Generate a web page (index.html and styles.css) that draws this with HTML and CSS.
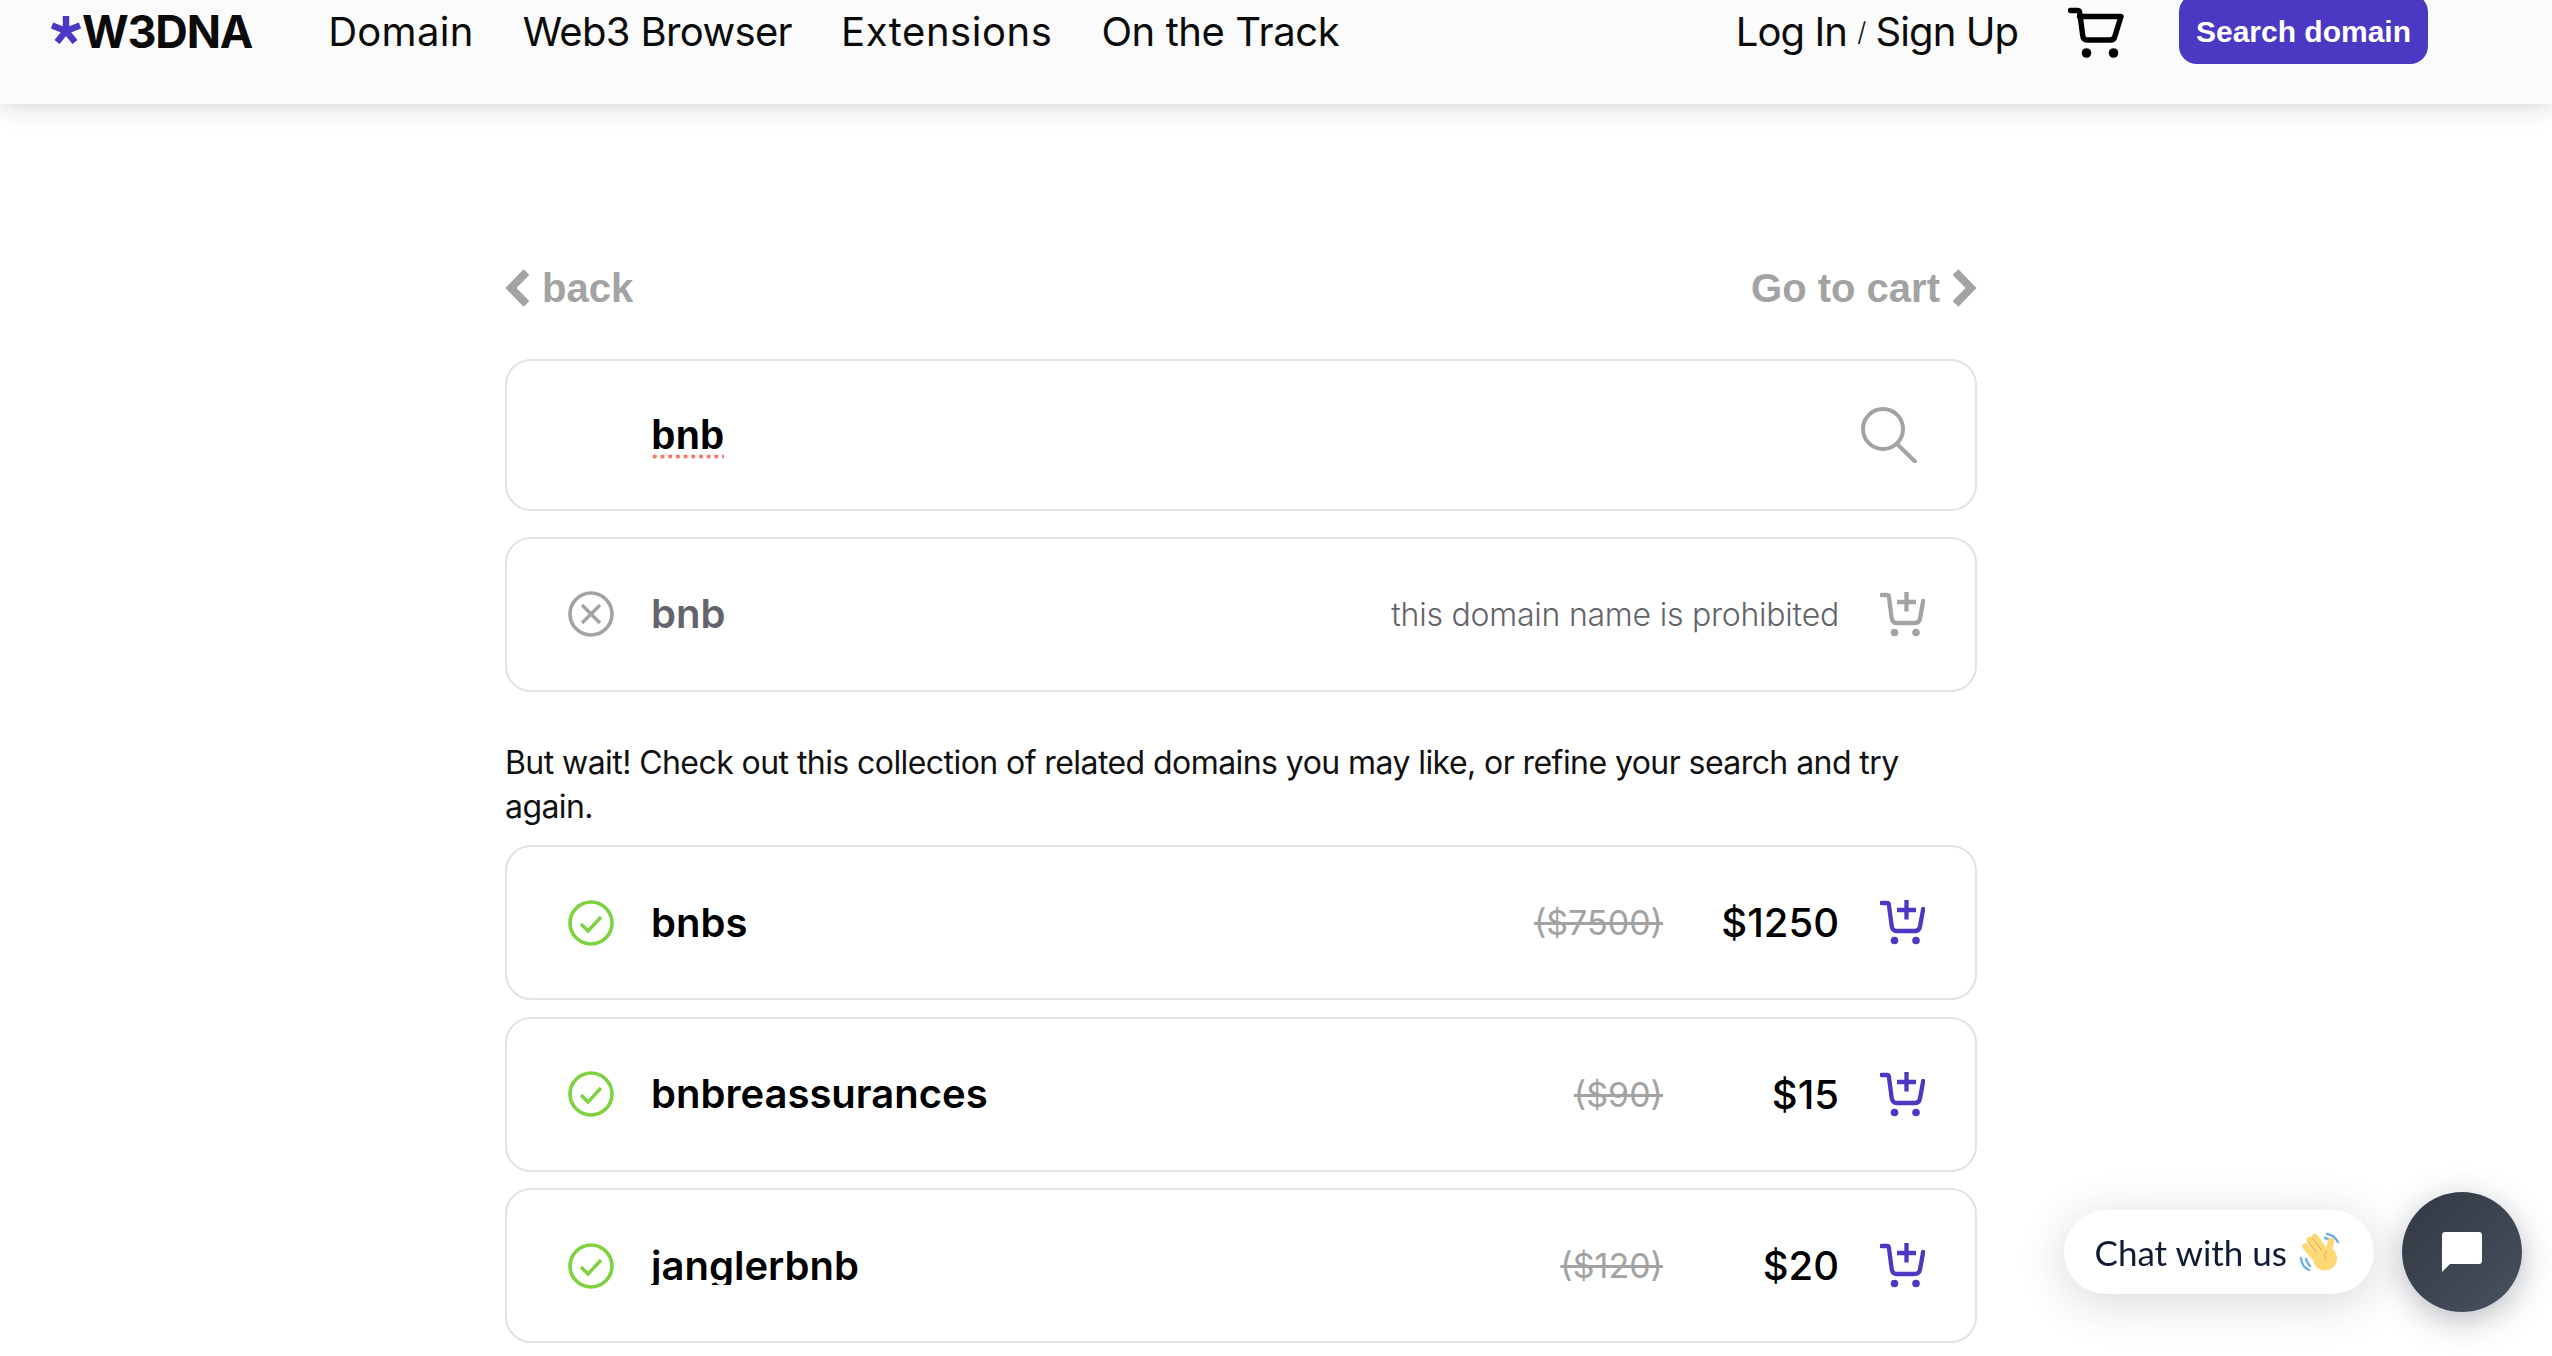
FILE: index.html
```html
<!DOCTYPE html>
<html lang="en">
<head>
<meta charset="UTF-8">
<meta name="viewport" content="width=device-width, initial-scale=1.0">
<title>W3DNA - Domain search</title>
<link rel="stylesheet" href="styles.css">
</head>
<body>
<svg class="sprite" width="0" height="0">
    <symbol id="cart-plus" viewBox="0 0 45 45">
        <path d="M1.500 3h5.500c1 0 1.700.6 1.900 1.700L11.700 26c.4 3 2 5 5 5h17.800c3 0 5-1.700 5.500-4.500L43.200 9" fill="none" stroke="currentColor" stroke-width="4.300" stroke-linecap="round" stroke-linejoin="round"/>
        <path d="M26.500 0v19.500M17 10h19" fill="none" stroke="currentColor" stroke-width="4.300"/>
        <circle cx="14.500" cy="40.500" r="3.800" fill="currentColor"/>
        <circle cx="36" cy="40.500" r="3.800" fill="currentColor"/>
    </symbol>
    <symbol id="check" viewBox="0 0 46 46">
        <circle cx="23" cy="23" r="21" fill="none" stroke="#7ed23f" stroke-width="3.600"/>
        <path d="M13 24l7 7 13-14" fill="none" stroke="#7ed23f" stroke-width="3.400"/>
    </symbol>
</svg>

<header class="topbar">
    <a class="logo">
        <svg class="logo-star" viewBox="0 0 30 28"><path d="M15 0v15M1 9.500l14 5.500M29 9.500L15 15M6 26l9-11M24 26l-9-11" stroke="#4b38c3" stroke-width="6.500" fill="none"/></svg>
        <span>W3DNA</span>
    </a>
    <nav class="nav">
        <a>Domain</a>
        <a>Web3 Browser</a>
        <a>Extensions</a>
        <a>On the Track</a>
    </nav>
    <a class="login">Log In <small>/</small> Sign Up</a>
    <svg class="top-cart" viewBox="0 0 56 52">
        <path d="M2.500 3.500h7c1.200 0 2 .7 2.200 2l3.100 23.500c.3 2.500 2 4 4.500 4h23c2.500 0 4-1.500 4.500-3.500L53 9.500H11.500" fill="none" stroke="#000" stroke-width="5.400" stroke-linecap="round" stroke-linejoin="round"/>
        <circle cx="18.500" cy="46" r="4.800"/>
        <circle cx="45.500" cy="46" r="4.800"/>
    </svg>
    <a class="btn-search">Search domain</a>
</header>

<main class="content">
    <div class="back-row">
        <a class="back-link">
            <svg class="chevron" viewBox="0 0 24 38"><path d="M21.500 3L6 19l15.500 16" fill="none" stroke="#a3a3a3" stroke-width="8"/></svg>
            back
        </a>
        <a class="back-link">
            Go to cart
            <svg class="chevron" viewBox="0 0 24 38"><path d="M2.500 3L18 19 2.500 35" fill="none" stroke="#a3a3a3" stroke-width="8"/></svg>
        </a>
    </div>

    <div class="card search-card">
        <span class="search-text">bnb</span>
        <svg class="search-icon" viewBox="0 0 56 56"><circle cx="22" cy="22" r="20" fill="none" stroke="#a3a3a3" stroke-width="4"/><path d="M36 37l18 17.500" stroke="#a3a3a3" stroke-width="4" stroke-linecap="round"/></svg>
    </div>

    <div class="card result muted">
        <svg class="state" viewBox="0 0 46 46"><circle cx="23" cy="23" r="21" fill="none" stroke="#a3a3a3" stroke-width="3.600"/><path d="M14 14l18 18M32 14L14 32" stroke="#a3a3a3" stroke-width="3.400"/></svg>
        <span class="name">bnb</span>
        <span class="note">this domain name is prohibited</span>
        <svg class="add"><use href="#cart-plus"/></svg>
    </div>

    <p class="hint">But wait! Check out this collection of related domains you may like, or refine your search and try again.</p>

    <div class="card result">
        <svg class="state"><use href="#check"/></svg>
        <span class="name">bnbs</span>
        <s class="old-price">($7500)</s>
        <span class="price">$1250</span>
        <svg class="add"><use href="#cart-plus"/></svg>
    </div>
    <div class="card result">
        <svg class="state"><use href="#check"/></svg>
        <span class="name">bnbreassurances</span>
        <s class="old-price">($90)</s>
        <span class="price">$15</span>
        <svg class="add"><use href="#cart-plus"/></svg>
    </div>
    <div class="card result">
        <svg class="state"><use href="#check"/></svg>
        <span class="name name-cut">janglerbnb</span>
        <s class="old-price">($120)</s>
        <span class="price">$20</span>
        <svg class="add"><use href="#cart-plus"/></svg>
    </div>
</main>

<div class="chat">
    <div class="chat-label">
        Chat with us
        <svg class="wave" viewBox="0 0 40 40">
            <path d="M27 2c4 .500 8 3 11 8M25 6c3 .500 5 2 7 5" fill="none" stroke="#6caeea" stroke-width="2.400" stroke-linecap="round"/>
            <path d="M1 26c.500 5 3 10 8 12M6 27c.500 3 2 5 4 7" fill="none" stroke="#6caeea" stroke-width="2.400" stroke-linecap="round"/>
            <path d="M5.500 14.500L16 27M9.500 8L20 22M15 5l9 13M31 9l-2 12" fill="none" stroke="#fcd975" stroke-width="6.400" stroke-linecap="round"/>
            <circle cx="25" cy="26.500" r="12" fill="#fcd975"/>
            <path d="M8 10l9 11M12.500 6l9 12M27 19c-3 3-3 6-1 9" fill="none" stroke="#e8a15c" stroke-width="1"/>
        </svg>
    </div>
    <div class="chat-btn">
        <svg viewBox="0 0 40 40"><path d="M3 0h34a3 3 0 0 1 3 3v26a3 3 0 0 1-3 3H8l-8 8V3a3 3 0 0 1 3-3z" fill="#fff"/></svg>
    </div>
</div>
</body>
</html>
```
FILE: styles.css
```css
* {
    box-sizing: border-box;
}

html, body {
    height: 100%;
}

body {
    margin: 0;
    background-color: #fff;
    font-family: Inter, "Liberation Sans", sans-serif;
    color: #000;
    overflow: hidden;
}

.sprite {
    position: absolute;
}

/* Top bar */
.topbar {
    display: flex;
    align-items: flex-start;
    height: 104px;
    padding: 0 124px 0 51px;
    background-color: #fbfbfb;
    box-shadow: 0 2px 24px rgba(0, 0, 0, 0.18);
}

.logo {
    display: flex;
    align-items: flex-start;
    font-size: 45px;
    font-weight: 700;
    letter-spacing: -1.2px;
    line-height: 64px;
    color: #0b0b0b;
}

.logo-star {
    width: 30px;
    height: 28px;
    margin-top: 16px;
    margin-right: 1px;
}

.nav {
    display: flex;
    gap: 49px;
    margin-left: 76px;
}

.nav a, .login {
    font-size: 40px;
    font-weight: 400;
    letter-spacing: -0.65px;
    line-height: 64px;
    color: #0b0b0b;
}

.nav a:first-child {
    letter-spacing: 0.3px;
}

.nav a:nth-child(3) {
    letter-spacing: 0.55px;
}

.nav a:last-child {
    letter-spacing: -0.4px;
}

.login {
    margin-left: auto;
    letter-spacing: -0.95px;
}

.login small {
    font-size: 26px;
    font-weight: 300;
    vertical-align: 5px;
}

.top-cart {
    width: 56px;
    height: 52px;
    margin: 7px 55px 0 50px;
}

.btn-search {
    display: flex;
    align-items: center;
    justify-content: center;
    width: 249px;
    height: 70px;
    margin-top: -6px;
    padding-top: 6px;
    border-radius: 18px;
    background-color: #4b38c3;
    color: #fff;
    font-family: "Liberation Sans", Arial, sans-serif;
    font-size: 30px;
    font-weight: 700;
}

/* Main column */
.content {
    width: 1472px;
    margin-left: 505px;
    padding-top: 160px;
}

.back-row {
    display: flex;
    justify-content: space-between;
    align-items: center;
    height: 48px;
    margin-bottom: 47px;
}

.back-link {
    display: flex;
    align-items: center;
    gap: 13px;
    font-family: "Liberation Sans", Arial, sans-serif;
    font-size: 40px;
    font-weight: 700;
    color: #a3a3a3;
}

.chevron {
    width: 24px;
    height: 38px;
}

.card {
    display: flex;
    align-items: center;
    border: 2px solid #dfe3ea;
    border-radius: 26px;
}

.search-card {
    justify-content: space-between;
    height: 152px;
    margin-bottom: 26px;
    padding: 0 58px 0 144px;
}

.search-text {
    margin-top: 2px;
    padding-bottom: 3px;
    font-family: "Liberation Sans", Arial, sans-serif;
    font-size: 40px;
    font-weight: 700;
    line-height: 42px;
    background-image: radial-gradient(circle, #f8766a 1.8px, transparent 2.300px);
    background-size: 7.700px 5px;
    background-position: 0 100%;
    background-repeat: repeat-x;
}

.search-icon {
    width: 56px;
    height: 56px;
}

.result {
    height: 155px;
    margin-bottom: 16.500px;
    padding: 0 50px 0 61px;
}

.result.muted {
    height: 154.500px;
    margin-bottom: 0;
}

.state {
    flex: none;
    width: 46px;
    height: 46px;
    margin-right: 37px;
}

.name {
    height: 48px;
    margin-right: auto;
    font-size: 40px;
    font-weight: 600;
    line-height: 48px;
}

/* descenders get cut off on this one, same as the live site */
.name-cut {
    height: 43px;
    margin-bottom: 5px;
    overflow: hidden;
}

.muted .name {
    color: #63646b;
}

.note {
    font-size: 32px;
    font-weight: 300;
    letter-spacing: -0.23px;
    color: #63646b;
}

.old-price {
    font-size: 34px;
    color: #a3a3a3;
}

.price {
    width: 176px;
    font-size: 40px;
    font-weight: 500;
    text-align: right;
}

.add {
    flex: none;
    width: 45px;
    height: 45px;
    margin-left: 41px;
    color: #4b38c3;
}

.muted .add {
    color: #a3a3a3;
}

.hint {
    margin: 49.500px 0 16px;
    font-size: 32px;
    font-weight: 400;
    letter-spacing: -0.57px;
    line-height: 44px;
    color: #111;
}

/* Chat widget */
.chat {
    position: fixed;
    right: 30px;
    bottom: 44px;
    display: flex;
    align-items: center;
    gap: 28px;
}

.chat-label {
    display: flex;
    align-items: center;
    gap: 13px;
    height: 84px;
    padding: 0 34px 0 31px;
    border-radius: 42px;
    background-color: #fff;
    box-shadow: 0 8px 48px rgba(50, 60, 75, 0.2);
    font-family: Lato, sans-serif;
    font-size: 35px;
    color: #0f1b33;
}

.wave {
    width: 40px;
    height: 40px;
}

.chat-btn {
    display: flex;
    align-items: center;
    justify-content: center;
    width: 120px;
    height: 120px;
    border-radius: 50%;
    background: linear-gradient(135deg, #313843, #48515e);
    box-shadow: 0 8px 32px rgba(50, 60, 75, 0.35);
}

.chat-btn svg {
    width: 40px;
    height: 40px;
}
```
